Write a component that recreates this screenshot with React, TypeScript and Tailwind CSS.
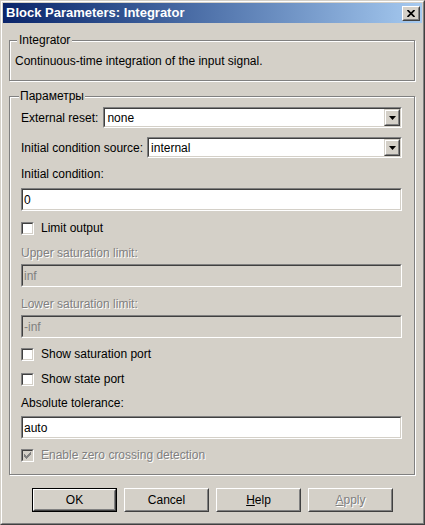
import React from "react";

const DIS = "text-[#808080] [text-shadow:1px_1px_0_#fff]";

function EditField({ value, disabled }: { value: string; disabled?: boolean }) {
  return (
    <div className="h-[23px] border border-t-[#808080] border-l-[#808080] border-b-white border-r-white">
      <div
        className={`h-full border border-t-[#404040] border-l-[#404040] border-b-[#d4d0c8] border-r-[#d4d0c8] flex items-center px-[1px] ${
          disabled ? "bg-[#d4d0c8] text-[#808080]" : "bg-white text-black"
        }`}
      >
        {value}
      </div>
    </div>
  );
}

function Combo({ value }: { value: string }) {
  return (
    <div className="flex-1 h-[21px] border border-t-[#808080] border-l-[#808080] border-b-white border-r-white">
      <div className="h-full border border-t-[#404040] border-l-[#404040] border-b-[#d4d0c8] border-r-[#d4d0c8] bg-white flex items-center">
        <span className="flex-1 pl-[2px]">{value}</span>
        <div className="w-[16px] h-full border border-t-[#d4d0c8] border-l-[#d4d0c8] border-b-[#404040] border-r-[#404040]">
          <div className="h-full bg-[#d4d0c8] border border-t-white border-l-white border-b-[#808080] border-r-[#808080] flex items-center justify-center">
            <svg width="7" height="4" viewBox="0 0 7 4">
              <polygon points="0,0 7,0 3.5,4" fill="#000" />
            </svg>
          </div>
        </div>
      </div>
    </div>
  );
}

const CHECK_OFFSETS = [2, 3, 4, 3, 2, 1, 0];

function CheckBox({ checked, disabled }: { checked?: boolean; disabled?: boolean }) {
  return (
    <div className="w-[13px] h-[13px] shrink-0 border border-t-[#808080] border-l-[#808080] border-b-white border-r-white">
      <div
        className={`h-full border border-t-[#404040] border-l-[#404040] border-b-[#d4d0c8] border-r-[#d4d0c8] flex items-center justify-center ${
          disabled ? "bg-[#d4d0c8]" : "bg-white"
        }`}
      >
        {checked && (
          <svg width="7" height="7" viewBox="0 0 7 7" shapeRendering="crispEdges">
            {CHECK_OFFSETS.map((y, x) => (
              <rect key={x} x={x} y={y} width="1" height="3" fill={disabled ? "#808080" : "#000"} />
            ))}
          </svg>
        )}
      </div>
    </div>
  );
}

function CheckRow({ label, checked, disabled, className }: { label: string; checked?: boolean; disabled?: boolean; className: string }) {
  return (
    <div className={`flex items-center h-[14px] ${className}`}>
      <CheckBox checked={checked} disabled={disabled} />
      <span className={`ml-[7px] ${disabled ? DIS : ""}`}>{label}</span>
    </div>
  );
}

function Button({ children, isDefault, disabled }: { children: React.ReactNode; isDefault?: boolean; disabled?: boolean }) {
  const face = (
    <div className="h-full border border-t-white border-l-white border-b-[#404040] border-r-[#404040]">
      <div
        className={`h-full border border-t-[#d4d0c8] border-l-[#d4d0c8] border-b-[#808080] border-r-[#808080] flex items-center justify-center ${
          disabled ? DIS : "text-black"
        }`}
      >
        {children}
      </div>
    </div>
  );
  return (
    <div className={`w-[85px] h-[24px] ${isDefault ? "border border-black" : ""}`}>{face}</div>
  );
}

export default function App() {
  return (
    <div className="w-[425px] h-[525px] bg-[#d4d0c8] font-['Liberation_Sans',Arial,sans-serif] text-[12px] leading-[14px] text-black border border-t-[#d4d0c8] border-l-[#d4d0c8] border-b-[#404040] border-r-[#404040]">
      <div className="h-full border border-t-white border-l-white border-b-[#808080] border-r-[#808080] p-[1px] flex flex-col">
        {/* title bar */}
        <div className="h-[20px] shrink-0 flex items-center bg-gradient-to-r from-[#0a246a] to-[#a6caf0] pl-[3px] pr-[2px]">
          <span className="flex-1 text-white font-bold text-[13px]">Block Parameters: Integrator</span>
          <div className="w-[18px] h-[15px] border border-t-white border-l-white border-b-[#404040] border-r-[#404040]">
            <div className="h-full bg-[#d4d0c8] border border-t-[#d4d0c8] border-l-[#d4d0c8] border-b-[#808080] border-r-[#808080] flex items-center justify-center">
              <svg width="8" height="7" viewBox="0 0 8 7">
                <path d="M0.5 0 L7.5 7 M7.5 0 L0.5 7" stroke="#000" strokeWidth="1.7" />
              </svg>
            </div>
          </div>
        </div>

        {/* Integrator group */}
        <div className="ml-[6px] mr-[7px] mt-[17px] border border-[#808080] shadow-[inset_1px_1px_0_#fff,1px_1px_0_#fff] pl-[5px] pb-[12px]">
          <span className="block w-fit -mt-[8px] ml-[2px] px-[2px] bg-[#d4d0c8]">Integrator</span>
          <p className="mt-[7px]">Continuous-time integration of the input signal.</p>
        </div>

        {/* Parameters group */}
        <div className="ml-[6px] mr-[7px] mt-[15px] border border-[#808080] shadow-[inset_1px_1px_0_#fff,1px_1px_0_#fff] pl-[11px] pr-[12px] pb-[12px] flex flex-col">
          <span className="block w-fit -mt-[8px] -ml-[2px] px-[1px] bg-[#d4d0c8]">Параметры</span>
          <div className="mt-[4px] flex items-center gap-[5px]">
            <span>External reset:</span>
            <Combo value="none" />
          </div>
          <div className="mt-[9px] flex items-center gap-[4px]">
            <span>Initial condition source:</span>
            <Combo value="internal" />
          </div>
          <span className="mt-[9px]">Initial condition:</span>
          <div className="mt-[7px]">
            <EditField value="0" />
          </div>
          <CheckRow className="mt-[10px]" label="Limit output" />
          <span className={`mt-[11px] ${DIS}`}>Upper saturation limit:</span>
          <div className="mt-[4px]">
            <EditField value="inf" disabled />
          </div>
          <span className={`mt-[10px] ${DIS}`}>Lower saturation limit:</span>
          <div className="mt-[4px]">
            <EditField value="-inf" disabled />
          </div>
          <CheckRow className="mt-[9px]" label="Show saturation port" />
          <CheckRow className="mt-[11px]" label="Show state port" />
          <span className="mt-[10px]">Absolute tolerance:</span>
          <div className="mt-[6px]">
            <EditField value="auto" />
          </div>
          <CheckRow className="mt-[9px]" label="Enable zero crossing detection" checked disabled />
        </div>

        {/* buttons */}
        <div className="mt-[13px] ml-[29px] flex gap-[7px]">
          <Button isDefault>OK</Button>
          <Button>Cancel</Button>
          <Button>
            <span>
              <span className="underline">H</span>elp
            </span>
          </Button>
          <Button disabled>
            <span>
              <span className="underline">A</span>pply
            </span>
          </Button>
        </div>
      </div>
    </div>
  );
}
